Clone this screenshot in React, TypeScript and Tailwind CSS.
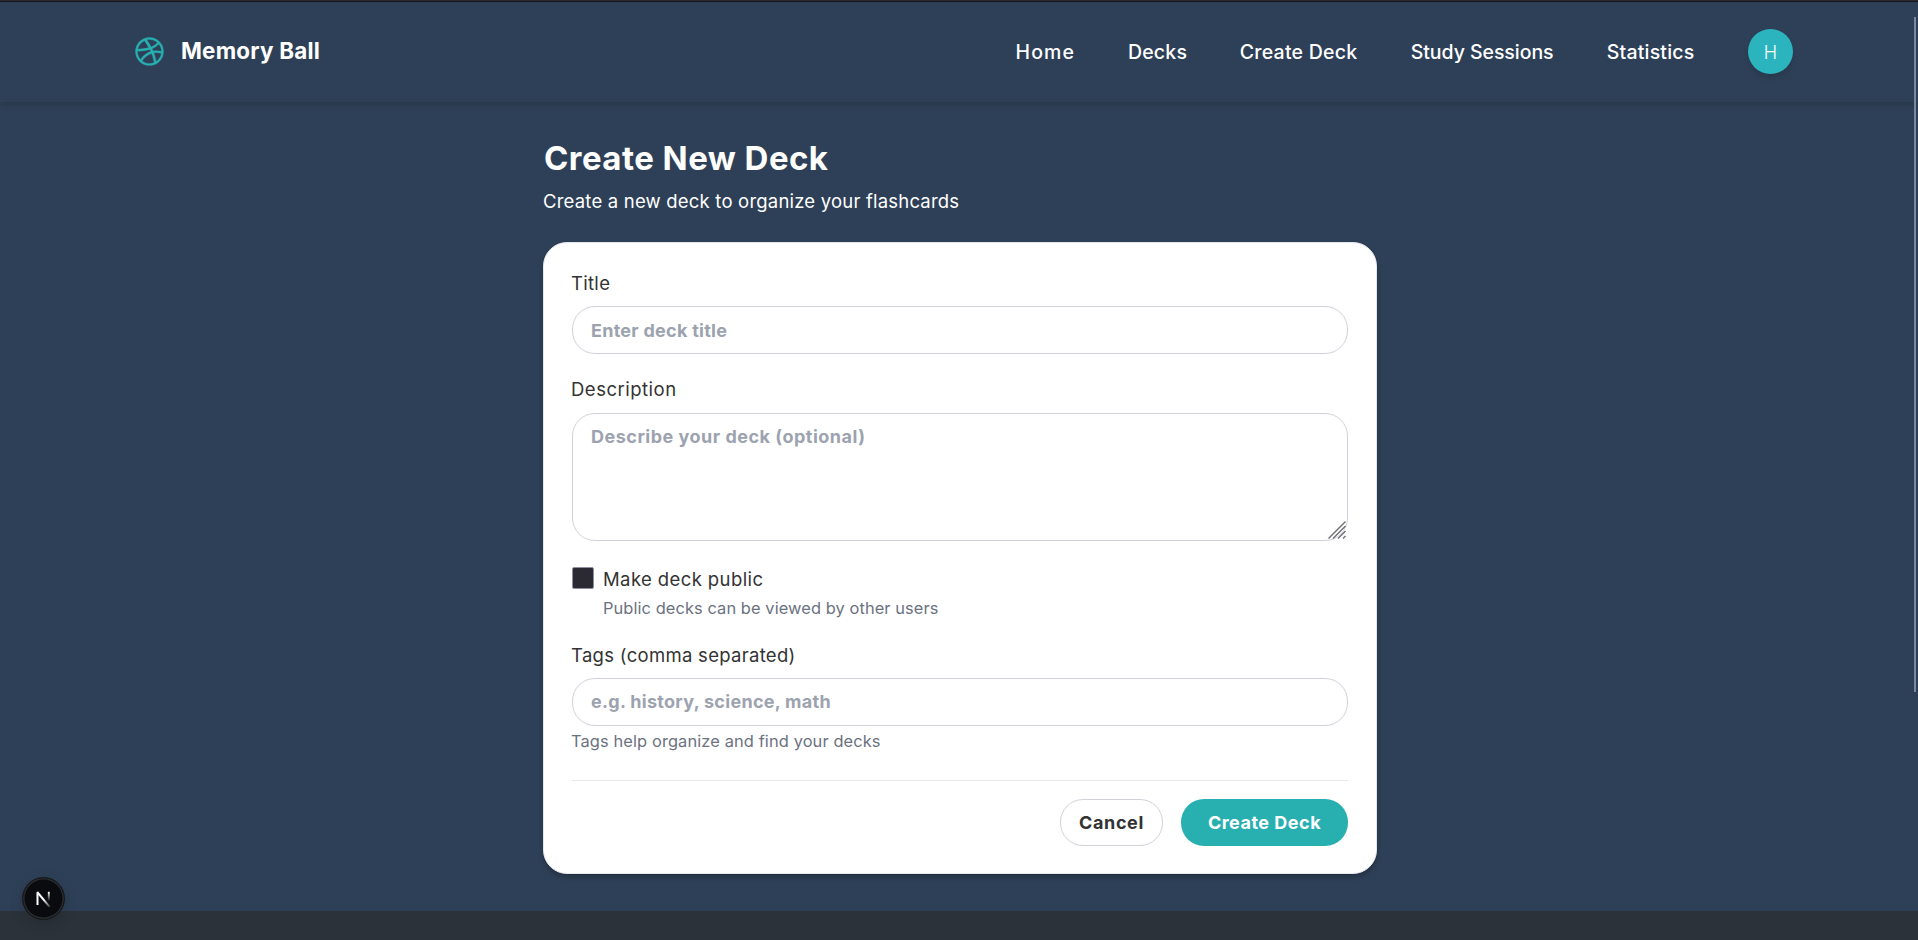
import { FaDribbble } from "react-icons/fa";

const navItems = [
  { label: "Home", style: "w-[58.5px] tracking-[1.2px]" },
  { label: "Decks", style: "w-[57.8px] tracking-[0.2px]" },
  { label: "Create Deck", style: "w-[117px] tracking-[0.25px]" },
  { label: "Study Sessions", style: "w-[142px] tracking-[-0.05px]" },
  { label: "Statistics", style: "w-[87.3px] tracking-[0.2px]" },
];

const fieldClass =
  "block w-full rounded-[23px] border border-[#d1d1db] bg-white pl-[18px] pr-4 text-[18px] font-bold text-[#333] outline-none placeholder:text-[#9ca3af] placeholder:opacity-100";
const labelClass = "-ml-px block h-[26px] text-[18.5px] leading-[25px] text-[#333333]";
const hintClass = "h-[22px] text-[16.4px] leading-[20px] text-[#6b7280]";

function Header() {
  return (
    <header className="relative flex h-[102px] items-center justify-between border-t border-[#2b2a30] pl-[135px] pr-[125px] shadow-[0_4px_6px_-1px_rgba(0,0,0,0.1),0_2px_4px_-1px_rgba(0,0,0,0.06)] before:absolute before:inset-x-0 before:top-0 before:h-px before:bg-[#15161b]">
      <a href="#" className="flex items-center gap-[17px]">
        <FaDribbble size={29} stroke="#28afb0" strokeWidth={6} className="mb-px text-[#28afb0]" />
        <span className="-mt-px text-[22.4px] leading-7 font-bold tracking-[0.22px] text-white">Memory Ball</span>
      </a>
      <nav className="flex items-center gap-[54px]">
        {navItems.map((item) => (
          <a
            key={item.label}
            href="#"
            className={`text-[19.5px] leading-7 font-medium whitespace-nowrap text-white ${item.style}`}
          >
            {item.label}
          </a>
        ))}
        <button className="flex size-[45px] items-center justify-center rounded-full bg-[#2bb4be] pt-0.5 text-[18px] font-light text-white shadow-[0_4px_6px_-1px_rgba(0,0,0,0.15)]">
          H
        </button>
      </nav>
    </header>
  );
}

function ResizeHandle() {
  return (
    <svg
      className="pointer-events-none absolute right-[2px] bottom-[2px]"
      width="18"
      height="18"
      viewBox="0 0 18 18"
      stroke="#6f6f73"
      strokeWidth="1.4"
    >
      <path d="M0.5 17.5 17.5 0.5M5 17.5 17.5 5M10 17.5 17.5 10M15 17.5 17.5 15" />
    </svg>
  );
}

function DeckForm() {
  return (
    <form className="mt-[27px] rounded-[24px] border border-[#e5e7eb] bg-white px-7 pt-7 pb-[27px] shadow-[0_4px_6px_-1px_rgba(0,0,0,0.2),0_2px_4px_-1px_rgba(0,0,0,0.12)]">
      <label htmlFor="title" className={`${labelClass} tracking-[0.3px]`}>
        Title
      </label>
      <input
        id="title"
        placeholder="Enter deck title"
        className={`${fieldClass} mt-[9px] h-12 tracking-[0.27px]`}
      />

      <label htmlFor="description" className={`${labelClass} mt-[23px] tracking-[0.5px]`}>
        Description
      </label>
      <div className="relative mt-[10px]">
        <textarea
          id="description"
          placeholder="Describe your deck (optional)"
          className={`${fieldClass} h-32 resize-none pt-[9px] leading-[27px] tracking-[0.5px]`}
        />
        <ResizeHandle />
      </div>

      <div className="mt-[26px] flex h-[22px] items-center gap-[9px]">
        <input
          id="public"
          type="checkbox"
          className="size-[22px] appearance-none rounded-[2px] border border-[#8f8f9d] bg-[#2b2a33]"
        />
        <label htmlFor="public" className="pt-px text-[18.5px] leading-[22px] tracking-[0.4px] text-[#333333]">
          Make deck public
        </label>
      </div>
      <p className={`${hintClass} mt-[9px] pl-[31px] tracking-[0.09px]`}>Public decks can be viewed by other users</p>

      <label htmlFor="tags" className={`${labelClass} mt-[23px] tracking-[0.3px]`}>
        Tags (comma separated)
      </label>
      <input
        id="tags"
        placeholder="e.g. history, science, math"
        className={`${fieldClass} mt-[9px] h-12 pb-0.5 tracking-[0.29px]`}
      />
      <p className={`${hintClass} -ml-px mt-[5px] tracking-[0.12px]`}>Tags help organize and find your decks</p>

      <div className="mt-[27px] flex justify-end gap-[18px] border-t border-[#e5e7eb] pt-[18px]">
        <button
          type="button"
          className="h-[47px] w-[103px] rounded-[23px] border border-[#d1d1db] bg-white text-[18px] font-bold tracking-[0.6px] text-[#333333]"
        >
          Cancel
        </button>
        <button
          type="button"
          className="h-[47px] w-[167px] rounded-[23px] bg-[#28afb0] text-[18px] font-bold tracking-[0.5px] text-white"
        >
          Create Deck
        </button>
      </div>
    </form>
  );
}

function DevBadge() {
  return (
    <div className="absolute bottom-5 left-[22px] flex size-[43px] items-center justify-center rounded-full border border-[#17191c] bg-[#090b0e] shadow-[0_4px_14px_rgba(0,0,0,0.15),inset_0_0_0_1.5px_#2b2c2e]">
      <svg width="15" height="17" viewBox="0 0 15 17" fill="none">
        <defs>
          <linearGradient id="diagonal" x1="8" y1="9" x2="14" y2="16" gradientUnits="userSpaceOnUse">
            <stop stopColor="#fff" />
            <stop offset="1" stopColor="#fff" stopOpacity="0.25" />
          </linearGradient>
          <linearGradient id="stem" x1="12" y1="2" x2="12" y2="11" gradientUnits="userSpaceOnUse">
            <stop stopColor="#fff" />
            <stop offset="1" stopColor="#fff" stopOpacity="0" />
          </linearGradient>
        </defs>
        <path d="M1.5 15V2.5" stroke="#fff" strokeWidth="2" />
        <path d="M1.2 2 13.6 16.8" stroke="url(#diagonal)" strokeWidth="2" />
        <path d="M12.8 1.8V11" stroke="url(#stem)" strokeWidth="1.9" />
      </svg>
    </div>
  );
}

export default function App() {
  return (
    <div className="relative flex h-[940px] flex-col overflow-hidden bg-[#2e4057] font-['Inter','Liberation_Sans',sans-serif]">
      <Header />
      <main className="ml-[543px] w-[834px] py-[37px]">
        <h1 className="h-10 pl-px text-[33px] leading-[38px] font-bold tracking-[0.45px] text-white">
          Create New Deck
        </h1>
        <p className="mt-[9px] h-[27px] text-[18.5px] leading-[27px] tracking-[0.2px] text-white">
          Create a new deck to organize your flashcards
        </p>
        <DeckForm />
      </main>
      <footer className="flex-1 bg-[#2b323a]" />
      <DevBadge />
      <div className="absolute top-[17px] right-0.5 h-[675px] w-0.5 bg-[#7d869a]" />
    </div>
  );
}
